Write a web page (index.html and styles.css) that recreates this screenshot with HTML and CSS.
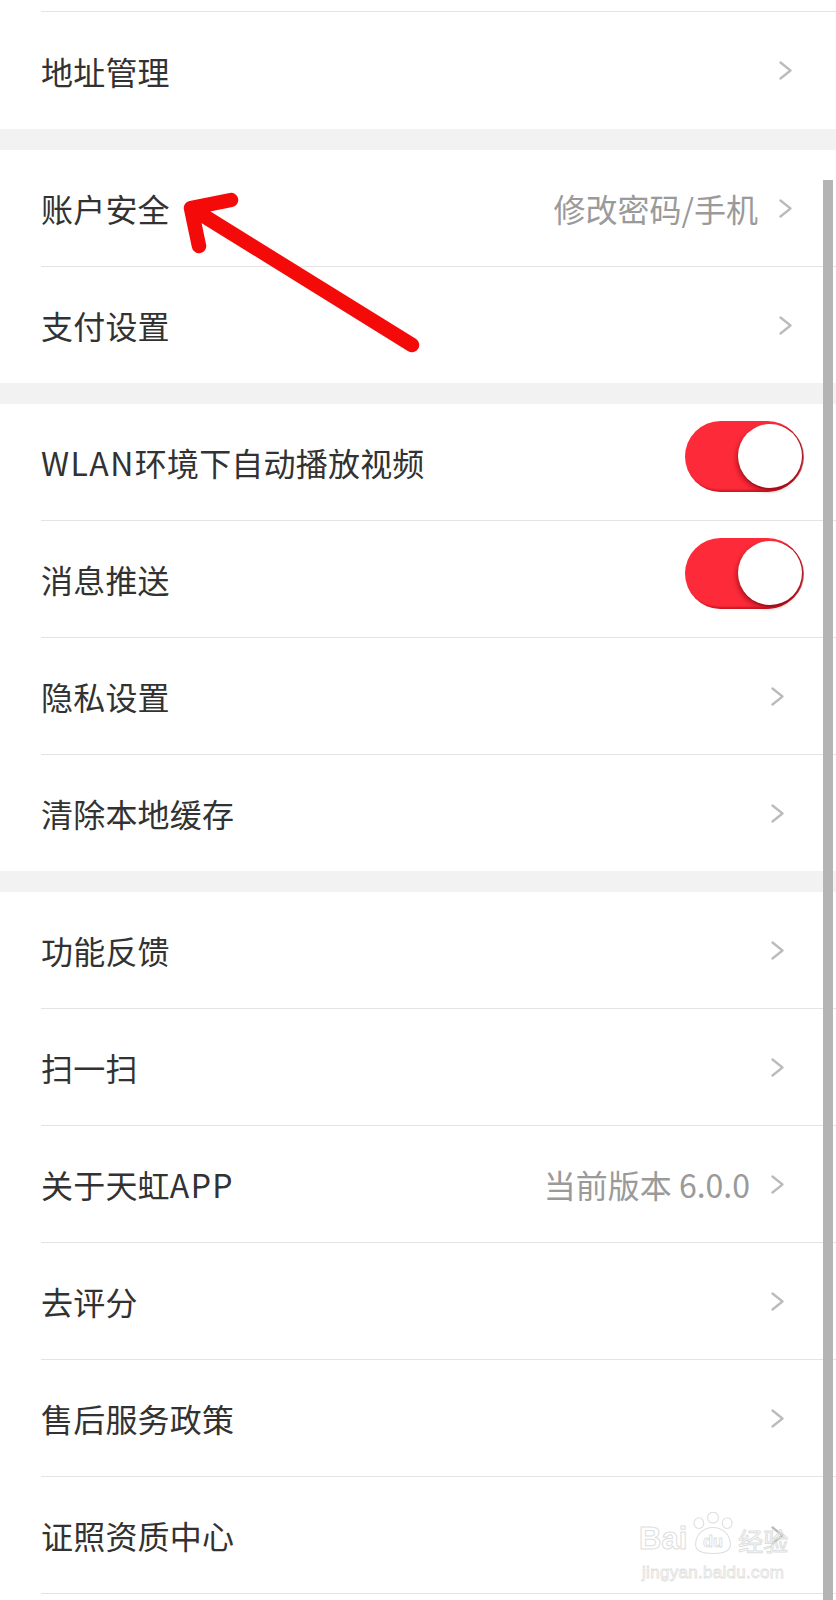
FILE: index.html
```html
<!DOCTYPE html>
<html lang="zh-CN">
<head>
<meta charset="utf-8">
<title>设置</title>
<link rel="stylesheet" href="styles.css">
</head>
<body>
<div class="page">
  <section class="group group--a">
    <div class="row"><div class="row-body row-body--partial"></div></div>
    <div class="row row--last"><div class="row-body row-body--first"><span class="label">地址管理</span><svg class="chev" viewBox="0 0 13 19"><polyline points="1.5,1.5 11.5,9.5 1.5,17.5"/></svg></div></div>
  </section>
  <section class="group group--a">
    <div class="row"><div class="row-body"><span class="label">账户安全</span><span class="value">修改密码/手机</span><svg class="chev" viewBox="0 0 13 19"><polyline points="1.5,1.5 11.5,9.5 1.5,17.5"/></svg></div></div>
    <div class="row row--last"><div class="row-body"><span class="label">支付设置</span><svg class="chev" viewBox="0 0 13 19"><polyline points="1.5,1.5 11.5,9.5 1.5,17.5"/></svg></div></div>
  </section>
  <section class="group group--b">
    <div class="row"><div class="row-body"><span class="label"><span class="latin">WLAN</span>环境下自动播放视频</span><span class="toggle"><span class="knob"></span></span></div></div>
    <div class="row"><div class="row-body"><span class="label">消息推送</span><span class="toggle"><span class="knob"></span></span></div></div>
    <div class="row"><div class="row-body"><span class="label">隐私设置</span><svg class="chev" viewBox="0 0 13 19"><polyline points="1.5,1.5 11.5,9.5 1.5,17.5"/></svg></div></div>
    <div class="row row--last"><div class="row-body"><span class="label">清除本地缓存</span><svg class="chev" viewBox="0 0 13 19"><polyline points="1.5,1.5 11.5,9.5 1.5,17.5"/></svg></div></div>
  </section>
  <section class="group group--b group--tail">
    <div class="row"><div class="row-body"><span class="label">功能反馈</span><svg class="chev" viewBox="0 0 13 19"><polyline points="1.5,1.5 11.5,9.5 1.5,17.5"/></svg></div></div>
    <div class="row"><div class="row-body"><span class="label">扫一扫</span><svg class="chev" viewBox="0 0 13 19"><polyline points="1.5,1.5 11.5,9.5 1.5,17.5"/></svg></div></div>
    <div class="row"><div class="row-body"><span class="label">关于天虹<span class="latin">APP</span></span><span class="value">当前版本 6.0.0</span><svg class="chev" viewBox="0 0 13 19"><polyline points="1.5,1.5 11.5,9.5 1.5,17.5"/></svg></div></div>
    <div class="row"><div class="row-body"><span class="label">去评分</span><svg class="chev" viewBox="0 0 13 19"><polyline points="1.5,1.5 11.5,9.5 1.5,17.5"/></svg></div></div>
    <div class="row"><div class="row-body"><span class="label">售后服务政策</span><svg class="chev" viewBox="0 0 13 19"><polyline points="1.5,1.5 11.5,9.5 1.5,17.5"/></svg></div></div>
    <div class="row"><div class="row-body"><span class="label">证照资质中心</span><svg class="chev" viewBox="0 0 13 19"><polyline points="1.5,1.5 11.5,9.5 1.5,17.5"/></svg></div></div>
  </section>

  <div class="scrollbar"></div>

  <svg class="arrow" viewBox="0 0 836 1600" width="836" height="1600">
    <path d="M412 345 L191 208 M231 200 L191 208 L199 246"/>
  </svg>

  <div class="watermark">
    <div class="wm-top">
      <span class="wm-bai">Bai</span>
      <svg class="wm-paw" viewBox="0 0 46 40">
        <ellipse cx="23" cy="5" rx="5" ry="5"/>
        <ellipse cx="10" cy="10" rx="4.5" ry="5"/>
        <ellipse cx="36" cy="10" rx="4.5" ry="5"/>
        <path d="M7 30 C7 19 16 14 23 14 C30 14 39 19 39 30 C39 37 31 38 23 38 C15 38 7 37 7 30 Z"/>
        <text x="23" y="32" text-anchor="middle" class="wm-du">du</text>
      </svg>
      <span class="wm-jy">经验</span>
    </div>
    <div class="wm-url">jingyan.baidu.com</div>
  </div>
</div>
</body>
</html>
```
FILE: styles.css
```css
html, body {
  margin: 0;
  padding: 0;
}
body {
  background: #f2f2f2;
  font-family: "Noto Sans CJK SC", "Noto Sans", sans-serif;
}
.page {
  position: relative;
  width: 836px;
  height: 1600px;
  overflow: hidden;
}
.group {
  background: #fff;
  margin-bottom: 21px;
}
.group--tail {
  margin-bottom: 0;
  padding-bottom: 40px;
}
.row {
  padding-left: 41px;
}
.row-body {
  height: 116px;
  display: flex;
  align-items: center;
  border-bottom: 1px solid #e4e4e4;
}
.group--a .row-body { padding-right: 44px; }
.group--b .row-body { padding-right: 52px; }
.row--last .row-body { border-bottom: none; }
.row-body--partial { height: 11px; }
.row-body--first { height: 117px; }
.label {
  flex: 1;
  font-size: 32px;
  color: #323232;
  line-height: 1;
  white-space: nowrap;
  letter-spacing: 0.2px;
}
.latin {
  letter-spacing: 1.4px;
}
.value {
  font-size: 32px;
  color: #9a9a9a;
  line-height: 1;
  margin-right: 21px;
  white-space: nowrap;
}
.chev {
  width: 13px;
  height: 19px;
  flex: none;
  fill: none;
  stroke: #bbbbbb;
  stroke-width: 2.3;
  stroke-linecap: round;
  stroke-linejoin: round;
}
.toggle {
  position: relative;
  width: 118px;
  height: 71px;
  border-radius: 36px;
  background: #fd2a3a;
  margin-right: -19px;
  margin-bottom: 12px;
  box-shadow: inset -2px -2px 2px rgba(140, 0, 10, 0.45);
  flex: none;
}
.knob {
  position: absolute;
  right: 1px;
  top: 3px;
  width: 64px;
  height: 64px;
  border-radius: 50%;
  background: #fff;
  box-shadow: -2px 3px 4px rgba(120, 0, 10, 0.45), 1px 1px 0 1px rgba(170, 20, 30, 0.7);
}
.scrollbar {
  position: absolute;
  left: 823px;
  top: 180px;
  width: 10px;
  height: 1420px;
  background: #b4b4b4;
}
.arrow {
  position: absolute;
  left: 0;
  top: 0;
  pointer-events: none;
}
.arrow path {
  fill: none;
  stroke: #f50a0a;
  stroke-width: 14.5;
  stroke-linecap: round;
  stroke-linejoin: round;
}
.watermark {
  position: absolute;
  left: 639px;
  top: 1506px;
  width: 160px;
  color: rgba(255, 255, 255, 0.5);
}
.wm-top {
  display: flex;
  align-items: flex-end;
  height: 50px;
}
.wm-bai {
  font-family: "Liberation Sans", Arial, sans-serif;
  font-size: 31px;
  font-weight: bold;
  line-height: 1;
  color: transparent;
  -webkit-text-stroke: 1px #dedede;
  margin-bottom: 2px;
}
.wm-paw {
  width: 50px;
  height: 44px;
  margin-left: 1px;
  margin-bottom: 0;
}
.wm-paw ellipse, .wm-paw path {
  fill: none;
  stroke: #dedede;
  stroke-width: 1;
}
.wm-du {
  font-family: "Liberation Sans", Arial, sans-serif;
  font-size: 15px;
  font-weight: bold;
  fill: none;
  stroke: #dedede;
  stroke-width: 0.8;
}
.wm-jy {
  font-family: "Noto Sans CJK SC", sans-serif;
  font-size: 25px;
  line-height: 1;
  color: transparent;
  -webkit-text-stroke: 1px #dedede;
  margin-bottom: 3px;
}
.wm-url {
  font-family: "Liberation Sans", Arial, sans-serif;
  font-size: 17px;
  line-height: 1;
  color: transparent;
  -webkit-text-stroke: 0.8px #e0e0e0;
  margin-top: 8px;
  margin-left: 3px;
  letter-spacing: 0.3px;
}
```
